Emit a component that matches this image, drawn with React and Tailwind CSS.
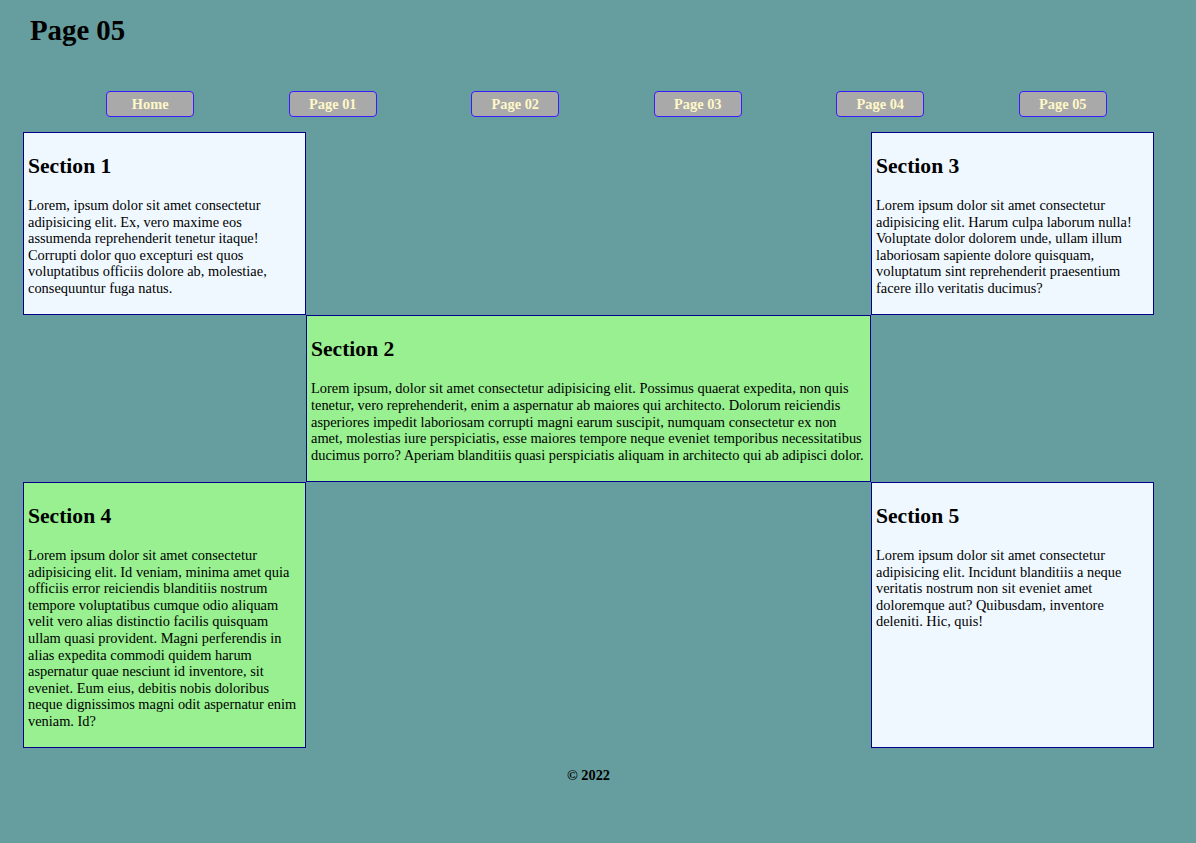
const sections = {
  s1: 'Lorem, ipsum dolor sit amet consectetur adipisicing elit. Ex, vero maxime eos assumenda reprehenderit tenetur itaque! Corrupti dolor quo excepturi est quos voluptatibus officiis dolore ab, molestiae, consequuntur fuga natus.',
  s2: 'Lorem ipsum, dolor sit amet consectetur adipisicing elit. Possimus quaerat expedita, non quis tenetur, vero reprehenderit, enim a aspernatur ab maiores qui architecto. Dolorum reiciendis asperiores impedit laboriosam corrupti magni earum suscipit, numquam consectetur ex non amet, molestias iure perspiciatis, esse maiores tempore neque eveniet temporibus necessitatibus ducimus porro? Aperiam blanditiis quasi perspiciatis aliquam in architecto qui ab adipisci dolor.',
  s3: 'Lorem ipsum dolor sit amet consectetur adipisicing elit. Harum culpa laborum nulla! Voluptate dolor dolorem unde, ullam illum laboriosam sapiente dolore quisquam, voluptatum sint reprehenderit praesentium facere illo veritatis ducimus?',
  s4: 'Lorem ipsum dolor sit amet consectetur adipisicing elit. Id veniam, minima amet quia officiis error reiciendis blanditiis nostrum tempore voluptatibus cumque odio aliquam velit vero alias distinctio facilis quisquam ullam quasi provident. Magni perferendis in alias expedita commodi quidem harum aspernatur quae nesciunt id inventore, sit eveniet. Eum eius, debitis nobis doloribus neque dignissimos magni odit aspernatur enim veniam. Id?',
  s5: 'Lorem ipsum dolor sit amet consectetur adipisicing elit. Incidunt blanditiis a neque veritatis nostrum non sit eveniet amet doloremque aut? Quibusdam, inventore deleniti. Hic, quis!',
}

const nav = ['Home', 'Page 01', 'Page 02', 'Page 03', 'Page 04', 'Page 05']

// caixa de seção: borda azul-escura, padding 4px
function Secao({ titulo, texto, verde, className = '' }) {
  return (
    <section className={`border border-[#00008b] px-[4px] py-[4px] ${verde ? 'bg-[#98f090]' : 'bg-[#f0f8ff]'} ${className}`}>
      <h2 className="text-[21.6px] font-bold leading-[25px] mt-[17px] mb-[18px]">{titulo}</h2>
      <p className="leading-[16.56px] mb-[14px]">{texto}</p>
    </section>
  )
}

export default function App() {
  return (
    <div className="min-h-screen bg-[#669e9f] text-black text-[14.4px] pb-8" style={{ fontFamily: '"Liberation Serif", "Times New Roman", serif' }}>
      <header className="pl-[30px] pt-[14px]">
        <h1 className="text-[28.8px] font-bold leading-[33px]">Page 05</h1>
      </header>

      <nav className="ml-[59px] w-[1095px] mt-[44px] grid grid-cols-6">
        {nav.map(n => (
          <div key={n} className="flex justify-center">
            <a className="w-[88px] h-[26px] grid place-items-center pt-[1px] rounded-[4px] border border-[#3a1cff] bg-[#a9a9a9] text-[#fff8c8] font-bold text-[14.4px]">{n}</a>
          </div>
        ))}
      </nav>

      <main className="ml-[23px] w-[1131px] mt-[15px] grid grid-cols-[283px_565px_283px]">
        <Secao titulo="Section 1" texto={sections.s1} className="col-start-1 row-start-1" />
        <Secao titulo="Section 3" texto={sections.s3} className="col-start-3 row-start-1" />
        <Secao titulo="Section 2" texto={sections.s2} verde className="col-start-2 row-start-2" />
        <Secao titulo="Section 4" texto={sections.s4} verde className="col-start-1 row-start-3" />
        <Secao titulo="Section 5" texto={sections.s5} className="col-start-3 row-start-3" />
      </main>

      <footer className="ml-[23px] w-[1131px] text-center font-bold mt-[17px]">© 2022</footer>
    </div>
  )
}
